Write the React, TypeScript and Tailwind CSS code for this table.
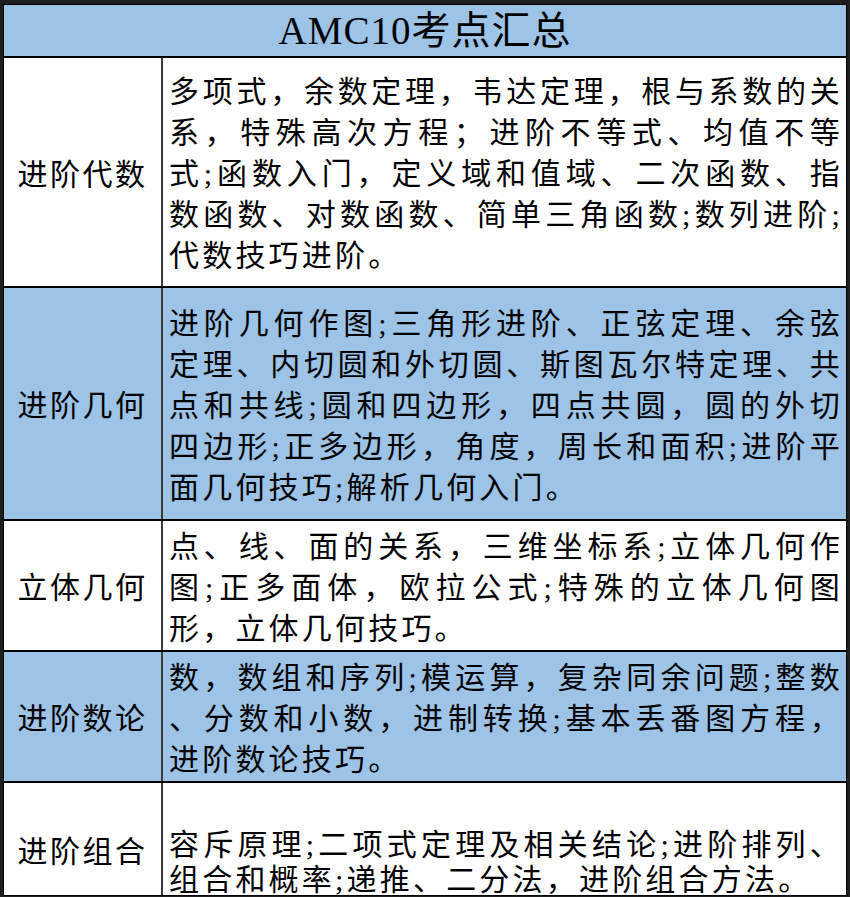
const rows: { label: string; lines: string[]; bg: string; h: string }[] = [
  {
    label: "进阶代数",
    bg: "bg-white",
    h: "h-[230px]",
    lines: [
      "多项式，余数定理，韦达定理，根与系数的关",
      "系，特殊高次方程；进阶不等式、均值不等",
      "式;函数入门，定义域和值域、二次函数、指",
      "数函数、对数函数、简单三角函数;数列进阶;",
      "代数技巧进阶。",
    ],
  },
  {
    label: "进阶几何",
    bg: "bg-[#9dc3e6]",
    h: "h-[233px]",
    lines: [
      "进阶几何作图;三角形进阶、正弦定理、余弦",
      "定理、内切圆和外切圆、斯图瓦尔特定理、共",
      "点和共线;圆和四边形，四点共圆，圆的外切",
      "四边形;正多边形，角度，周长和面积;进阶平",
      "面几何技巧;解析几何入门。",
    ],
  },
  {
    label: "立体几何",
    bg: "bg-white",
    h: "h-[131px]",
    lines: [
      "点、线、面的关系，三维坐标系;立体几何作",
      "图;正多面体，欧拉公式;特殊的立体几何图",
      "形，立体几何技巧。",
    ],
  },
  {
    label: "进阶数论",
    bg: "bg-[#9dc3e6]",
    h: "h-[131px]",
    lines: [
      "数，数组和序列;模运算，复杂同余问题;整数",
      "、分数和小数，进制转换;基本丢番图方程，",
      "进阶数论技巧。",
    ],
  },
];

const font = "font-['Liberation_Serif','Noto_Sans_CJK_SC',serif]";

function Lines({ lines, leading }: { lines: string[]; leading: string }) {
  return (
    <>
      {lines.map((l, i) => (
        <div
          key={i}
          className={`${leading} ${
            i < lines.length - 1 ? "text-justify [text-align-last:justify]" : "text-left"
          }`}
        >
          {l}
        </div>
      ))}
    </>
  );
}

export default function App() {
  return (
    <div className={`h-[897px] w-[850px] overflow-hidden bg-[#1e1e1e] px-[3px] pt-[4px] text-black ${font}`}>
      <div className="flex h-[892px] flex-col overflow-hidden border-x border-y border-black bg-white">
        {/* Title */}
        <div className="flex h-[53px] shrink-0 items-end justify-center border-b-2 border-black bg-[#9dc3e6] pb-[3px] text-[39px] leading-[44px] tracking-[1px]">
          AMC10考点汇总
        </div>

        {rows.map((r) => (
          <div key={r.label} className={`flex ${r.h} shrink-0 border-b-2 border-black ${r.bg}`}>
            <div className="flex w-[159px] shrink-0 items-center justify-center border-r-2 border-[#3a3a3a] pt-[4px] text-[30px] tracking-[2.5px]">
              {r.label}
            </div>
            <div className="flex flex-1 flex-col justify-center pl-[6px] pr-[3px] pt-[3px] text-[30px] tracking-[3.2px]">
              <Lines lines={r.lines} leading="leading-[41px]" />
            </div>
          </div>
        ))}

        {/* Last row, cut off at the bottom */}
        <div className="flex min-h-0 flex-1 overflow-hidden bg-white">
          <div className="flex w-[159px] shrink-0 justify-center border-r-2 border-[#3a3a3a] pt-[48px] text-[30px] leading-[41px] tracking-[2.5px]">
            进阶组合
          </div>
          <div className="flex flex-1 flex-col pl-[6px] pr-[3px] pt-[44px] text-[30px] tracking-[3.2px]">
            <Lines
              lines={["容斥原理;二项式定理及相关结论;进阶排列、", "组合和概率;递推、二分法，进阶组合方法。"]}
              leading="leading-[35px]"
            />
          </div>
        </div>
      </div>
    </div>
  );
}
